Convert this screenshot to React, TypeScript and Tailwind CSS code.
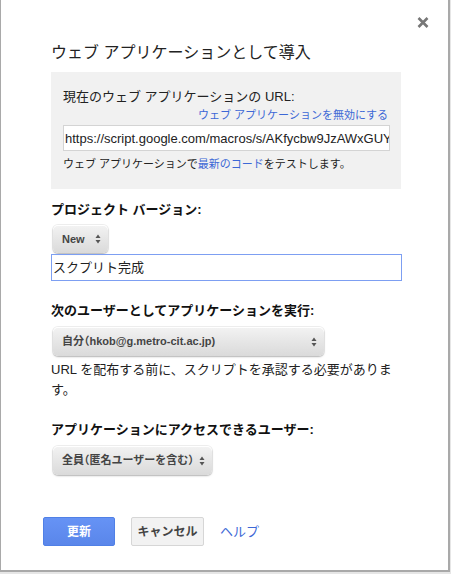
import React from "react";

const font = { fontFamily: '"Liberation Sans", "Noto Sans CJK JP", sans-serif' };

function Arrows() {
  return (
    <svg width="6" height="10" viewBox="0 0 6 10" className="shrink-0">
      <path d="M3 0.5 L5.5 4 L0.5 4 Z" fill="#555" />
      <path d="M3 9.5 L5.5 6 L0.5 6 Z" fill="#555" />
    </svg>
  );
}

function FakeSelect({ label, width, height }: { label: string; width: string; height: string }) {
  return (
    <div
      className={`ml-[2px] ${width} ${height} flex items-center justify-between gap-1 pl-[9px] pr-[7px] rounded-[5px] bg-gradient-to-b from-[#f3f3f3] via-[#e6e6e6] to-[#dadada] shadow-[0_0_0_1px_rgba(0,0,0,0.06),0_1px_2px_rgba(0,0,0,0.25),inset_0_1px_0_#fff]`}
    >
      <span className="text-[11px] font-bold text-[#444] leading-none whitespace-nowrap [font-feature-settings:'halt']">
        {label}
      </span>
      <Arrows />
    </div>
  );
}

export default function App() {
  return (
    <div className="min-h-screen bg-[#e6e6e6]" style={font}>
      <div className="relative w-[450px] h-[572px] bg-white border-l border-r-2 border-b-2 border-[#a9a9a9] text-[#222]">
        {/* close */}
        <button className="absolute top-[17px] left-[416px] w-[12px] h-[11px]" aria-label="close">
          <svg width="12" height="11" viewBox="0 0 12 11">
            <path d="M1.5 1 L10.5 10 M10.5 1 L1.5 10" stroke="#777" strokeWidth="2.6" />
          </svg>
        </button>

        <div className="pl-[50px] pt-[43px]">
          <h1 className="text-[16px] leading-5 font-normal text-[#222]">ウェブ アプリケーションとして導入</h1>

          {/* current url box */}
          <div className="mt-[9px] w-[350px] bg-[#f1f1f1] pl-3 pr-[11px] pt-[17px] pb-[18px]">
            <p className="text-[13px] leading-4 text-[#222]">現在のウェブ アプリケーションの URL:</p>
            <p className="mt-[3px] text-right text-[11px] leading-[14px]">
              <a className="text-[#3d68d6] mr-[2px]">ウェブ アプリケーションを無効にする</a>
            </p>
            <div className="mt-[3px] h-[26px] w-[327px] bg-white border border-[#d4d4d4] overflow-hidden flex items-center pl-[1px]">
              <span className="text-[13px] leading-none whitespace-nowrap text-[#222]">
                https://script.google.com/macros/s/AKfycbw9JzAWxGUY
              </span>
            </div>
            <p className="mt-[6px] text-[11px] leading-[14px] text-[#222]">
              ウェブ アプリケーションで<a className="text-[#3d68d6]">最新のコード</a>をテストします。
            </p>
          </div>

          <h2 className="mt-[13px] text-[13px] leading-4 font-bold text-[#111]">プロジェクト バージョン:</h2>
          <div className="mt-[7px]">
            <FakeSelect label="New" width="w-[55px]" height="h-[28px]" />
          </div>
          <div className="mt-[1px] w-[351px] h-[27px] border border-[#7d9ff2] flex items-center pl-[1px]">
            <span className="text-[13px] leading-none text-[#222]">スクプリト完成</span>
          </div>

          <h2 className="mt-[22px] text-[13px] leading-4 font-bold text-[#111]">次のユーザーとしてアプリケーションを実行:</h2>
          <div className="mt-[8px]">
            <FakeSelect label="自分（hkob@g.metro-cit.ac.jp)" width="w-[271px]" height="h-[29px]" />
          </div>
          <p className="mt-[4px] w-[350px] text-[13px] leading-5 text-[#222]">
            URL を配布する前に、スクリプトを承認する必要があります。
          </p>

          <h2 className="mt-[22px] text-[13px] leading-4 font-bold text-[#111]">アプリケーションにアクセスできるユーザー:</h2>
          <div className="mt-[8px]">
            <FakeSelect label="全員（匿名ユーザーを含む）" width="w-[159px]" height="h-[29px]" />
          </div>
        </div>

        {/* buttons */}
        <div className="mt-[42px] pl-[42px] flex items-center">
          <button className="w-[72px] h-[29px] rounded-[2px] bg-gradient-to-b from-[#6693f5] to-[#5a86ea] border border-[#5080e6] text-white text-[12px] font-bold">
            更新
          </button>
          <button className="ml-[16px] w-[73px] h-[29px] rounded-[2px] bg-[#f2f2f2] border border-[#d6d6d6] text-[#444] text-[12px] font-bold">
            キャンセル
          </button>
          <a className="ml-[16px] text-[13px] text-[#3d68d6]">ヘルプ</a>
        </div>
      </div>
    </div>
  );
}
